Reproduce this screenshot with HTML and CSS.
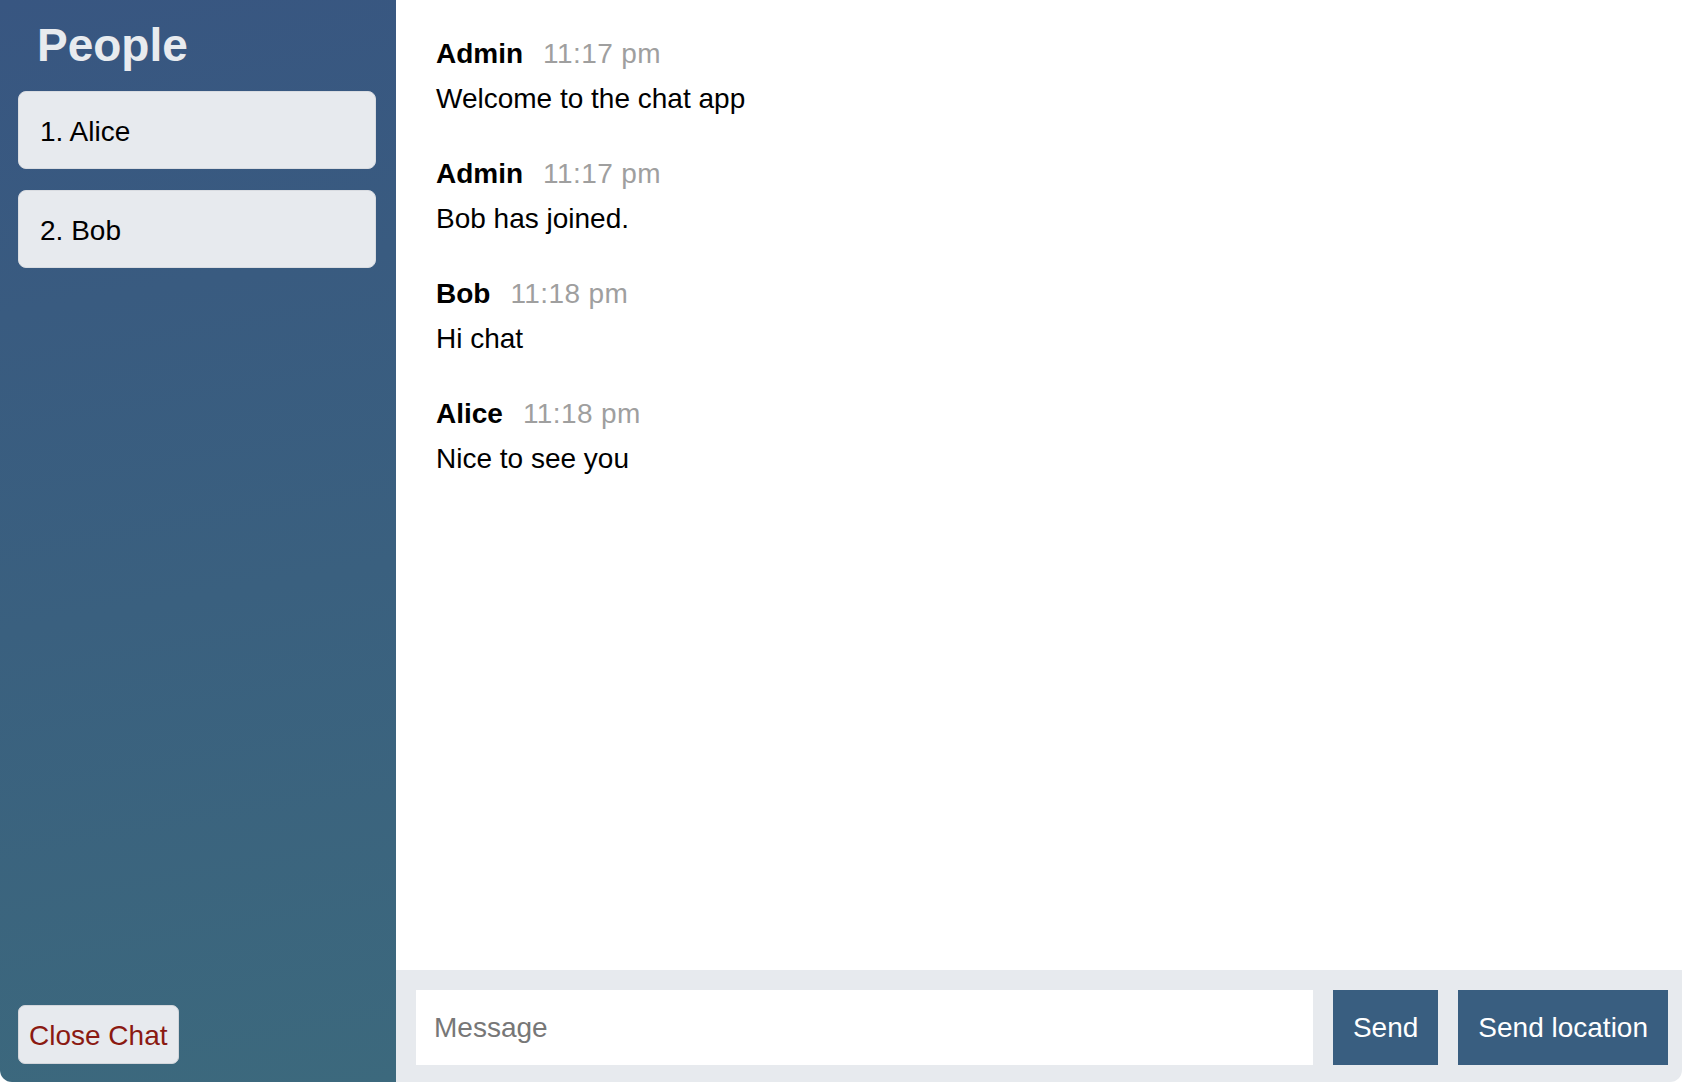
FILE: index.html
```html
<!DOCTYPE html>
<html lang="en">
<head>
<meta charset="utf-8">
<title>Chat</title>
<link rel="stylesheet" href="styles.css">
</head>
<body>
<div class="app">
  <aside class="sidebar">
    <h2 class="sidebar__title">People</h2>
    <ul class="users">
      <li class="user">1. Alice</li>
      <li class="user">2. Bob</li>
    </ul>
    <div class="sidebar__footer">
      <button class="btn-close" type="button">Close Chat</button>
    </div>
  </aside>
  <main class="chat">
    <div class="messages">
      <div class="message">
        <p class="message__meta"><span class="message__name">Admin</span><span class="message__time">11:17 pm</span></p>
        <p class="message__text">Welcome to the chat app</p>
      </div>
      <div class="message">
        <p class="message__meta"><span class="message__name">Admin</span><span class="message__time">11:17 pm</span></p>
        <p class="message__text">Bob has joined.</p>
      </div>
      <div class="message">
        <p class="message__meta"><span class="message__name">Bob</span><span class="message__time">11:18 pm</span></p>
        <p class="message__text">Hi chat</p>
      </div>
      <div class="message">
        <p class="message__meta"><span class="message__name">Alice</span><span class="message__time">11:18 pm</span></p>
        <p class="message__text">Nice to see you</p>
      </div>
    </div>
    <form class="compose">
      <input class="compose__input" type="text" placeholder="Message">
      <button class="compose__btn" type="button">Send</button>
      <button class="compose__btn" type="button">Send location</button>
    </form>
  </main>
</div>
</body>
</html>
```

FILE: styles.css
```css
* {
  box-sizing: border-box;
}

html, body {
  margin: 0;
  padding: 0;
  height: 100%;
  background: #ffffff;
}

body {
  font-family: "Liberation Sans", Arial, Helvetica, sans-serif;
  font-size: 28px;
  color: #111111;
}

.app {
  display: flex;
  height: 100vh;
  overflow: hidden;
  border-radius: 0 0 12px 12px;
}

.sidebar {
  width: 396px;
  flex-shrink: 0;
  display: flex;
  flex-direction: column;
  background: linear-gradient(170deg, #385681 0%, #3a607f 55%, #3c697d 100%);
}

.sidebar__title {
  margin: 0;
  padding: 19px 0 0 37px;
  font-size: 46px;
  line-height: 53px;
  font-weight: 700;
  color: #e8ebef;
}

.users {
  list-style: none;
  margin: 19px 20px 0 18px;
  padding: 0;
  display: flex;
  flex-direction: column;
  gap: 21px;
}

.user {
  background: #e7eaee;
  border: 1px solid #d9dce1;
  border-radius: 8px;
  padding: 22px 21px 18px 21px;
  line-height: 36px;
  font-size: 28px;
  color: #000000;
}

.sidebar__footer {
  margin-top: auto;
  padding: 0 0 18px 18px;
}

.btn-close {
  font-family: inherit;
  font-size: 28px;
  line-height: 33px;
  padding: 13px 10px 11px 10px;
  background: #e7eaee;
  color: #8b1a12;
  border: 1px solid #d3d6db;
  border-radius: 7px;
  cursor: pointer;
}

.chat {
  flex: 1;
  display: flex;
  flex-direction: column;
  min-width: 0;
}

.messages {
  flex: 1;
  padding: 31px 40px 0 40px;
  overflow: hidden;
}

.message {
  margin-bottom: 30px;
}

.message__meta,
.message__text {
  margin: 0;
  line-height: 45px;
  font-size: 28px;
}

.message__meta {
  display: flex;
  align-items: baseline;
  gap: 20px;
}

.message__name {
  font-weight: 700;
  color: #000000;
}

.message__time {
  color: #9f9f9f;
  letter-spacing: 0.4px;
}

.message__text {
  color: #000000;
}

.compose {
  margin: 0;
  flex-shrink: 0;
  display: flex;
  gap: 20px;
  background: #e7eaee;
  padding: 20px 14px 17px 20px;
}

.compose__input {
  flex: 1;
  min-width: 0;
  height: 75px;
  border: none;
  outline: none;
  background: #ffffff;
  padding: 0 18px;
  font-family: inherit;
  font-size: 28px;
  color: #111111;
}

.compose__input::placeholder {
  color: #777777;
}

.compose__btn {
  height: 75px;
  border: none;
  padding: 0 20px;
  background: #395e80;
  color: #ffffff;
  font-family: inherit;
  font-size: 28px;
  cursor: pointer;
}
```
